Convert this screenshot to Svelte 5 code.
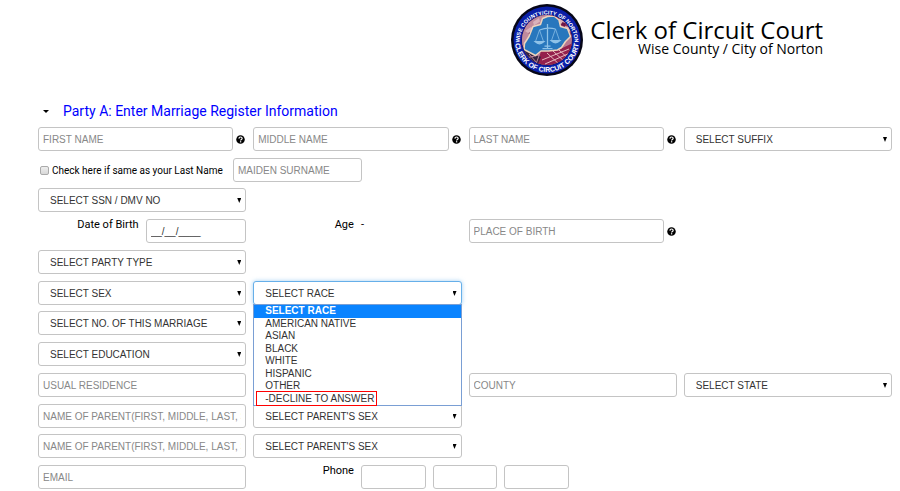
<script lang="ts">
  const races = [
    'SELECT RACE',
    'AMERICAN NATIVE',
    'ASIAN',
    'BLACK',
    'WHITE',
    'HISPANIC',
    'OTHER',
    '-DECLINE TO ANSWER',
  ];

  let open = $state(true);
  let raceOpen = $state(true);
  let race = $state(races[0]);
  let dob = $state('__/__/____');

  function pickRace(value: string) {
    race = value;
    raceOpen = false;
  }
</script>

{#snippet dropdown(text: string)}
  <div class="select">
    <select aria-label={text}>
      <option>{text}</option>
    </select>
  </div>
{/snippet}

{#snippet help(label: string)}
  <button class="help" type="button" aria-label={label}>
    <svg viewBox="0 0 18 18" aria-hidden="true">
      <circle cx="9" cy="9" r="8.5" fill="#000" />
      <path d="M5.8 7.2C5.9 5 7.1 4 9 4s3.3 1.1 3.3 2.9C12.3 9 9.2 9 9.2 11.2" fill="none" stroke="#fff" stroke-width="2.4" />
      <rect x="7.9" y="12.4" width="2.6" height="2.4" fill="#fff" />
    </svg>
  </button>
{/snippet}

<header class="masthead">
  <svg class="seal" viewBox="0 0 144 144" role="img" aria-label="Court seal">
    <defs>
      <path id="seal-top" d="M17 76A55 55 0 1 1 127 76" />
      <path id="seal-bottom" d="M8 72A64 64 0 0 0 136 72" />
      <clipPath id="seal-disc"><circle cx="72" cy="72" r="50" /></clipPath>
    </defs>
    <circle cx="72" cy="72" r="72" fill="#060617" />
    <circle cx="72" cy="72" r="67" fill="#0a1fa8" />
    <circle cx="72" cy="72" r="51" fill="#1b1440" />
    <g clip-path="url(#seal-disc)">
      <rect x="20" y="20" width="104" height="104" fill="#b9788f" />
      <path d="M20 20h60l-8 16-20 8-16 28-16 12z" fill="#c08a9c" />
      <path d="M78 20l12 16 12 8 20 22V20z" fill="#8f2c58" />
      <path d="M28 54l12-8 8 6-8 10zM92 32l10-4 6 10-9 2zM108 44l9 2 2 10-10-4zM44 36l12-8 2 7-12 8z" fill="#d9b2bb" />
      <path d="M103 36l7 3-3 6-7-4zM35 58l8-4-4 12z" fill="#6d1846" />
      <path d="M60 94l34-2 30-14v46H46z" fill="#94204c" />
      <path d="M20 84l22 12 18 10-8 18H24z" fill="#37233f" />
      <path d="M62 112l54-22M68 120l50-22M72 98l28 26M84 94l26 24M96 92l20 18" stroke="#e6b9bd" stroke-width="2" />
      <path d="M36 100l16 18M30 108l26-6M58 98l-8 22" stroke="#bb849b" stroke-width="2" />
      <path d="M63 29l10-4 13-1 10 8 3 13 14 4 6 16-10 10-8 12-8 5-18 2H60L49 103 26 91l1-12 9-14 8-20 15-4z" fill="#2877bd" stroke="#edd4bd" stroke-width="3" stroke-linejoin="round" />
    </g>
    <g fill="none" stroke="#8fc2e8" stroke-width="2.5">
      <path d="M73 40v48M57 52q16-6 32-2M63 89h20M67 84h12" />
      <path d="M57 52l-8 23h16zM89 50l-8 23h16z" stroke-width="1.5" />
      <path d="M48 75q9 9 18 0zM80 73q9 9 18 0z" fill="#8fc2e8" />
    </g>
    <g class="seal-text">
      <text><textPath href="#seal-top" startOffset="50%">WISE COUNTY/CITY OF NORTON</textPath></text>
      <text class="big"><textPath href="#seal-bottom" startOffset="50%">CLERK OF CIRCUIT COURT</textPath></text>
    </g>
  </svg>
  <div class="brand">
    <h1>Clerk of Circuit Court</h1>
    <p>Wise County / City of Norton</p>
  </div>
</header>

<main>
  <h2>
    <button class="toggle" type="button" aria-expanded={open} onclick={() => (open = !open)}>
      <span class="caret" aria-hidden="true"></span>
      Party A: Enter Marriage Register Information
    </button>
  </h2>

  {#if open}
    <form onsubmit={(e) => e.preventDefault()}>
      <div class="group">
        <div class="row">
          <div class="cell">
            <input type="text" placeholder="FIRST NAME" aria-label="First name" />
            {@render help('First name help')}
          </div>
          <div class="cell">
            <input type="text" placeholder="MIDDLE NAME" aria-label="Middle name" />
            {@render help('Middle name help')}
          </div>
          <div class="cell">
            <input type="text" placeholder="LAST NAME" aria-label="Last name" />
            {@render help('Last name help')}
          </div>
          <div class="cell">{@render dropdown('SELECT SUFFIX')}</div>
        </div>
        <div class="row">
          <div class="cell wide maiden">
            <input type="checkbox" id="same-name" />
            <label for="same-name">Check here if same as your Last Name</label>
            <input type="text" placeholder="MAIDEN SURNAME" aria-label="Maiden surname" />
          </div>
        </div>
      </div>

      <div class="group">
        <div class="row">
          <div class="cell">{@render dropdown('SELECT SSN / DMV NO')}</div>
        </div>
        <div class="row">
          <label class="side" for="dob">Date of Birth</label>
          <input type="text" id="dob" bind:value={dob} />
          <span class="side">Age</span>
          <span class="age">-</span>
          <div class="cell">
            <input type="text" placeholder="PLACE OF BIRTH" aria-label="Place of birth" />
            {@render help('Place of birth help')}
          </div>
        </div>
        <div class="row">
          <div class="cell">{@render dropdown('SELECT PARTY TYPE')}</div>
        </div>
        <div class="row">
          <div class="cell">{@render dropdown('SELECT SEX')}</div>
          <div class="cell race">
            <div class="select active">
              <select aria-label="Race" bind:value={race}>
                {#each races as name}
                  <option>{name}</option>
                {/each}
              </select>
            </div>
            {#if raceOpen}
              <ul class="options" role="listbox" aria-label="Race options">
                {#each races as name}
                  <li role="option" aria-selected={name === race}>
                    <button type="button" onclick={() => pickRace(name)}>
                      <span class:marked={name.startsWith('-')}>{name}</span>
                    </button>
                  </li>
                {/each}
              </ul>
            {/if}
          </div>
        </div>
      </div>

      <div class="group">
        <div class="row">
          <div class="cell">{@render dropdown('SELECT NO. OF THIS MARRIAGE')}</div>
        </div>
        <div class="row">
          <div class="cell">{@render dropdown('SELECT EDUCATION')}</div>
        </div>
        <div class="row">
          <div class="cell">
            <input type="text" placeholder="USUAL RESIDENCE" aria-label="Usual residence" />
          </div>
          <div class="cell third">
            <input type="text" placeholder="COUNTY" aria-label="County" />
          </div>
          <div class="cell">{@render dropdown('SELECT STATE')}</div>
        </div>
        <div class="row">
          <div class="cell">
            <input type="text" placeholder="NAME OF PARENT(FIRST, MIDDLE, LAST, SUFFIX)" aria-label="Name of first parent" />
          </div>
          <div class="cell">{@render dropdown("SELECT PARENT'S SEX")}</div>
        </div>
      </div>

      <div class="group">
        <div class="row">
          <div class="cell">
            <input type="text" placeholder="NAME OF PARENT(FIRST, MIDDLE, LAST, SUFFIX)" aria-label="Name of second parent" />
          </div>
          <div class="cell">{@render dropdown("SELECT PARENT'S SEX")}</div>
        </div>
        <div class="row">
          <div class="cell">
            <input type="email" placeholder="EMAIL" aria-label="Email" />
          </div>
          <label class="side" for="phone-area">Phone</label>
          <div class="cell phone">
            <input type="tel" id="phone-area" />
            <input type="tel" aria-label="Phone prefix" />
            <input type="tel" aria-label="Phone line number" />
          </div>
        </div>
      </div>
    </form>
  {/if}
</main>

<style>
  :global(body) {
    margin: 0;
    background: #fff;
    color: #000;
    font-family: Roboto, sans-serif;
    font-size: 11px;
  }

  /* ── Masthead ── */
  .masthead {
    display: flex;
    justify-content: flex-end;
    gap: 7px;
    padding: 4px 77px 0 0;
  }
  .seal {
    width: 72px;
    height: 72px;
  }
  .seal-text {
    fill: #fff;
    font-family: 'Liberation Sans Narrow', 'Liberation Sans', Arial, sans-serif;
    font-size: 11px;
    font-weight: 700;
    text-anchor: middle;
  }
  .seal-text .big {
    font-size: 14px;
  }
  .brand {
    padding-top: 12px;
    text-align: right;
  }
  h1,
  p {
    margin: 0;
    font-family: 'Open Sans', sans-serif;
    font-weight: 400;
  }
  h1 {
    font-size: 24px;
    line-height: 28px;
  }
  p {
    font-size: 14px;
    line-height: 10px;
  }

  /* ── Section heading ── */
  main {
    padding: 25px 8px 2px 38px;
  }
  h2 {
    margin: 0 0 6px;
    font-size: 14px;
    font-weight: 400;
    line-height: 20px;
  }
  .toggle {
    display: flex;
    align-items: center;
    gap: 14px;
    padding: 0 0 0 5px;
    border: 0;
    background: none;
    color: #00f;
    font: inherit;
    cursor: pointer;
  }
  .caret {
    border: solid transparent;
    border-width: 3px 3px 0;
    border-top-color: #000;
  }

  /* ── Form grid: two tracks per field ── */
  form {
    display: flex;
    flex-direction: column;
    gap: 6px;
  }
  .group {
    display: flex;
    flex-direction: column;
    gap: 7px;
  }
  .row {
    display: grid;
    grid-template-columns: repeat(8, minmax(0, 1fr));
    column-gap: 7px;
  }
  .cell {
    grid-column: span 2;
    display: flex;
    align-items: center;
    gap: 3px;
  }
  .wide {
    grid-column: span 4;
  }
  .third {
    grid-column: 5 / span 2;
  }
  .side {
    line-height: 12px;
    text-align: right;
  }
  .age {
    line-height: 12px;
  }
  .phone {
    gap: 7px;
  }

  /* ── Controls ── */
  input,
  select {
    box-sizing: border-box;
    width: 100%;
    min-width: 0;
    height: 24px;
    margin: 0;
    padding: 0 4px;
    border: 1px solid #c4c4c4;
    border-radius: 3px;
    background: #fff;
    color: #333;
    font-family: 'Liberation Sans', Arial, sans-serif;
    font-size: 10px;
  }
  input::placeholder {
    color: #888;
    opacity: 1;
  }
  .select {
    position: relative;
    flex: 1;
  }
  .select::after {
    content: '';
    position: absolute;
    top: 10px;
    right: 5px;
    width: 4px;
    height: 5px;
    background: #000;
    clip-path: polygon(0 0, 100% 0, 50% 100%);
    pointer-events: none;
  }
  select {
    display: block;
    padding: 0 12px 0 11px;
    appearance: none;
  }
  .active select {
    border-color: #66afe9;
    box-shadow: 0 0 4px rgba(102, 175, 233, 0.6);
  }
  .help {
    flex: none;
    width: 9px;
    height: 9px;
    margin-right: 1px;
    padding: 0;
    border: 0;
    background: none;
  }
  .help svg {
    display: block;
  }
  .maiden label {
    flex: none;
    width: 178px;
    font-size: 10px;
    white-space: nowrap;
  }
  .maiden input {
    width: 129px;
  }
  .maiden input[type='checkbox'] {
    width: 9px;
    height: 9px;
    margin-left: 2px;
    border: 1px solid #aaa;
    border-radius: 2px;
    background: linear-gradient(#eee, #d8d8d8);
    padding: 0;
    appearance: none;
  }
  .maiden input[type='checkbox']:checked {
    background: #0a84ff;
  }

  /* ── Race list ── */
  .race {
    position: relative;
  }
  .options {
    position: absolute;
    top: 23px;
    left: 0;
    right: 0;
    z-index: 2;
    display: grid;
    grid-auto-rows: 1fr;
    height: 100px;
    margin: 0;
    padding: 0;
    border: 1px solid #7a9fd4;
    background: #fff;
    list-style: none;
  }
  .options button {
    display: block;
    width: 100%;
    height: 100%;
    padding: 0 0 0 11px;
    border: 0;
    background: none;
    color: #333;
    font-family: 'Liberation Sans', Arial, sans-serif;
    font-size: 10px;
    line-height: 12px;
    text-align: left;
  }
  .options [aria-selected='true'] {
    background: #0a84ff;
  }
  .options [aria-selected='true'] button {
    color: #fff;
    font-weight: 700;
  }
  .marked {
    position: relative;
  }
  .marked::before {
    content: '';
    position: absolute;
    inset: -2px -3px -2px -9px;
    border: 1px solid #f00;
  }
</style>
